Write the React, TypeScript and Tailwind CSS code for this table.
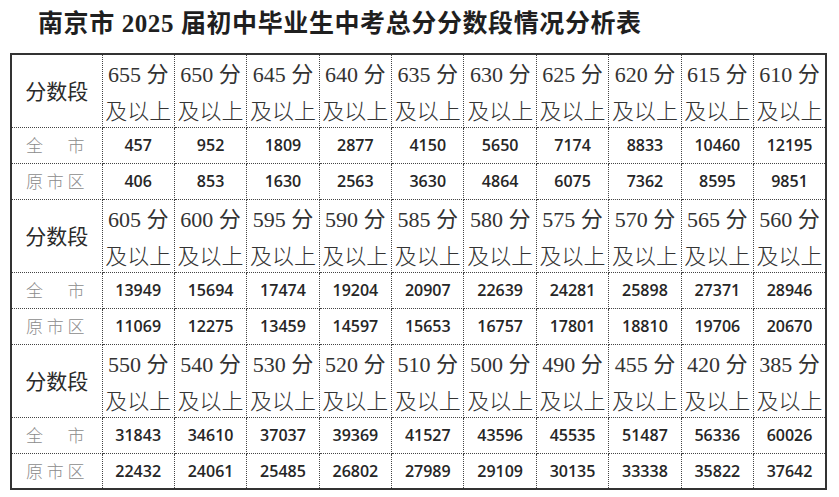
import React from "react";

interface Block {
  scores: number[];
  city: number[];
  urban: number[];
}

const blocks: Block[] = [
  {
    scores: [655, 650, 645, 640, 635, 630, 625, 620, 615, 610],
    city: [457, 952, 1809, 2877, 4150, 5650, 7174, 8833, 10460, 12195],
    urban: [406, 853, 1630, 2563, 3630, 4864, 6075, 7362, 8595, 9851],
  },
  {
    scores: [605, 600, 595, 590, 585, 580, 575, 570, 565, 560],
    city: [13949, 15694, 17474, 19204, 20907, 22639, 24281, 25898, 27371, 28946],
    urban: [11069, 12275, 13459, 14597, 15653, 16757, 17801, 18810, 19706, 20670],
  },
  {
    scores: [550, 540, 530, 520, 510, 500, 490, 455, 420, 385],
    city: [31843, 34610, 37037, 39369, 41527, 43596, 45535, 51487, 56336, 60026],
    urban: [22432, 24061, 25485, 26802, 27989, 29109, 30135, 33338, 35822, 37642],
  },
];

const cell = "border border-dotted border-[#444] p-0 text-center align-middle";
const num =
  "font-['Open_Sans','Liberation_Sans',sans-serif] text-[16px] font-semibold text-[#262626]";
const label =
  "font-['Noto_Sans_CJK_SC',sans-serif] text-[17px] font-light text-[#8c8c8c]";

const App: React.FC = () => {
  return (
    <div className="w-[839px] h-[497px] bg-white overflow-hidden">
      <h1 className="pl-[38px] pt-[8px] h-[53px] font-['Liberation_Serif','Noto_Sans_CJK_SC',serif] text-[25px] leading-[32px] font-semibold tracking-[0.6px] text-[#1f1f1f]">
        南京市 2025 届初中毕业生中考总分分数段情况分析表
      </h1>
      <table className="ml-[10px] w-[817px] table-fixed border-collapse border-2 border-solid border-[#333]">
        <colgroup>
          <col className="w-[91px]" />
          {Array.from({ length: 10 }).map((_, i) => (
            <col key={i} />
          ))}
        </colgroup>
        <tbody>
          {blocks.map((b, bi) => (
            <React.Fragment key={bi}>
              <tr className="h-[73px]">
                <td className={`${cell} font-['Noto_Sans_CJK_SC',sans-serif] text-[21px] text-[#2a2a2a]`}>
                  分数段
                </td>
                {b.scores.map((s) => (
                  <td
                    key={s}
                    className={`${cell} font-['Liberation_Serif','Noto_Sans_CJK_SC',serif] text-[22px] leading-[34px] pt-[2px] text-[#333]`}
                  >
                    <div className="whitespace-nowrap">{s} 分</div>
                    <div className="whitespace-nowrap font-['Noto_Sans_CJK_SC',sans-serif] font-light">
                      及以上
                    </div>
                  </td>
                ))}
              </tr>
              <tr className="h-[36px]">
                <td className={`${cell} ${label}`}>
                  <div className="flex justify-between pl-[14px] pr-[17px]">
                    <span>全</span>
                    <span>市</span>
                  </div>
                </td>
                {b.city.map((v, i) => (
                  <td key={i} className={`${cell} ${num}`}>
                    {v}
                  </td>
                ))}
              </tr>
              <tr className="h-[36px]">
                <td className={`${cell} ${label}`}>
                  <div className="flex justify-between pl-[14px] pr-[17px]">
                    <span>原</span>
                    <span>市</span>
                    <span>区</span>
                  </div>
                </td>
                {b.urban.map((v, i) => (
                  <td key={i} className={`${cell} ${num}`}>
                    {v}
                  </td>
                ))}
              </tr>
            </React.Fragment>
          ))}
        </tbody>
      </table>
    </div>
  );
};

export default App;
